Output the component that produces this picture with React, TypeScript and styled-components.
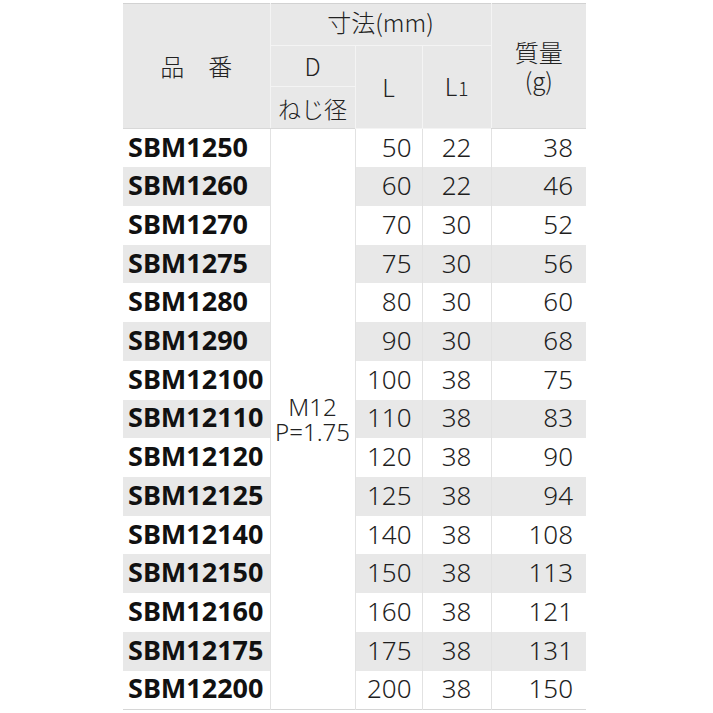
import styled, { createGlobalStyle } from "styled-components";

const rows: [string, number, number, number][] = [
    ["SBM1250", 50, 22, 38],
    ["SBM1260", 60, 22, 46],
    ["SBM1270", 70, 30, 52],
    ["SBM1275", 75, 30, 56],
    ["SBM1280", 80, 30, 60],
    ["SBM1290", 90, 30, 68],
    ["SBM12100", 100, 38, 75],
    ["SBM12110", 110, 38, 83],
    ["SBM12120", 120, 38, 90],
    ["SBM12125", 125, 38, 94],
    ["SBM12140", 140, 38, 108],
    ["SBM12150", 150, 38, 113],
    ["SBM12160", 160, 38, 121],
    ["SBM12175", 175, 38, 131],
    ["SBM12200", 200, 38, 150],
];

const App = () => {
    return (
        <>
            <GlobalStyle />
            <Page>
                <Table>
                    <colgroup>
                        <col style={{ width: 147 }} />
                        <col style={{ width: 85 }} />
                        <col style={{ width: 67 }} />
                        <col style={{ width: 69 }} />
                        <col style={{ width: 95 }} />
                    </colgroup>
                    <thead>
                        <HeadRow>
                            <Th rowSpan={3}>品　番</Th>
                            <Th colSpan={3} $lift>
                                寸法(mm)
                            </Th>
                            <Th rowSpan={3}>
                                質量
                                <br />
                                (g)
                            </Th>
                        </HeadRow>
                        <HeadRow>
                            <Th>D</Th>
                            <Th rowSpan={2}>L</Th>
                            <Th rowSpan={2}>
                                L<Sub>1</Sub>
                            </Th>
                        </HeadRow>
                        <HeadRow>
                            <Th $small>ねじ径</Th>
                        </HeadRow>
                    </thead>
                    <tbody>
                        {rows.map(([code, l, l1, mass], i) => (
                            <BodyRow key={code} $striped={i % 2 === 1}>
                                <Code>{code}</Code>
                                {i === 0 && (
                                    <Thread rowSpan={rows.length}>
                                        M12
                                        <br />
                                        P=1.75
                                    </Thread>
                                )}
                                <Num $align="right" $pad={10}>
                                    {l}
                                </Num>
                                <Num $align="center">{l1}</Num>
                                <Num $align="right" $pad={13}>
                                    {mass}
                                </Num>
                            </BodyRow>
                        ))}
                    </tbody>
                </Table>
            </Page>
        </>
    );
};

export default App;

const GlobalStyle = createGlobalStyle`
    html, body {
        margin: 0;
        padding: 0;
        background: #ffffff;
    }
    body {
        font-family: "Noto Sans", "Noto Sans CJK JP", sans-serif;
        color: #1e1e1e;
    }
`;

const Page = styled.div`
    width: 713px;
    height: 713px;
    padding: 3px 0 0 123px;
    box-sizing: border-box;
    overflow: hidden;
`;

const Table = styled.table`
    width: 463px;
    border-collapse: collapse;
    table-layout: fixed;
    border-top: 1px solid #d2d2d2;
    border-bottom: 1px solid #d6d6d6;
`;

const HeadRow = styled.tr`
    height: 41.7px;
`;

const Th = styled.th<{ $small?: boolean; $lift?: boolean }>`
    padding: 0 0 ${(p) => (p.$lift ? "5px" : "0")};
    background-color: #e8e8e8;
    border: 1px solid #f4f4f4;
    border-top: none;
    font-family: "Noto Sans CJK JP", "Noto Sans", sans-serif;
    font-weight: 300;
    font-size: ${(p) => (p.$small ? "23px" : "24px")};
    line-height: 28px;
    color: #222222;
    text-align: center;
    vertical-align: middle;
    &:first-child {
        border-left: none;
    }
    &:last-child {
        border-right: none;
    }
    thead tr:last-child &,
    &[rowspan="3"] {
        border-bottom: 1px solid #d8d8d8;
    }
`;

const Sub = styled.span`
    font-size: 19px;
    margin-left: 1px;
`;

const BodyRow = styled.tr<{ $striped: boolean }>`
    height: 38.73px;
    & > td {
        background-color: ${(p) => (p.$striped ? "#e8e8e8" : "#ffffff")};
    }
`;

const Code = styled.td`
    padding: 0 0 3px 5px;
    font-family: "Noto Sans", "Noto Sans CJK JP", sans-serif;
    font-weight: 700;
    font-size: 27px;
    line-height: 30px;
    color: #111111;
    border-right: 1px solid #e2e2e2;
    white-space: nowrap;
`;

const Thread = styled.td`
    && {
        background-color: #ffffff;
    }
    padding: 0;
    text-align: center;
    vertical-align: middle;
    font-family: "Noto Sans", sans-serif;
    font-weight: 300;
    font-size: 24px;
    line-height: 25px;
    color: #222222;
    border-right: 1px solid #e2e2e2;
`;

const Num = styled.td<{ $align: "right" | "center"; $pad?: number }>`
    padding: 0 ${(p) => p.$pad ?? 0}px 3px 0;
    text-align: ${(p) => p.$align};
    font-family: "Noto Sans", sans-serif;
    font-weight: 300;
    font-size: 26px;
    line-height: 30px;
    color: #1e1e1e;
    border-right: 1px solid #e2e2e2;
    &:last-child {
        border-right: none;
    }
`;
